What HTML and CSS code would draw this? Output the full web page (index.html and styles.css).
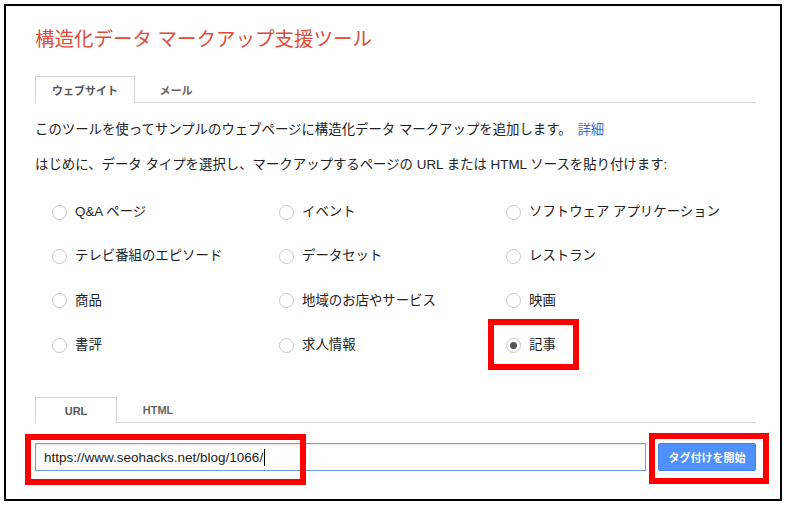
FILE: index.html
```html
<!DOCTYPE html>
<html lang="ja">
<head>
<meta charset="utf-8">
<title>構造化データ マークアップ支援ツール</title>
<link rel="stylesheet" href="styles.css">
</head>
<body>
<div class="frame">
  <h1 class="title">構造化データ マークアップ支援ツール</h1>

  <div class="tabs tabs-top">
    <div class="tab active">ウェブサイト</div>
    <div class="tab">メール</div>
  </div>

  <p class="intro">このツールを使ってサンプルのウェブページに構造化データ マークアップを追加します。 <a class="link" href="#">詳細</a></p>
  <p class="intro second">はじめに、データ タイプを選択し、マークアップするページの URL または HTML ソースを貼り付けます:</p>

  <div class="types">
    <div class="opt"><span class="radio"></span><span class="lbl">Q&amp;A ページ</span></div>
    <div class="opt"><span class="radio"></span><span class="lbl">イベント</span></div>
    <div class="opt"><span class="radio"></span><span class="lbl">ソフトウェア アプリケーション</span></div>
    <div class="opt"><span class="radio"></span><span class="lbl">テレビ番組のエピソード</span></div>
    <div class="opt"><span class="radio"></span><span class="lbl">データセット</span></div>
    <div class="opt"><span class="radio"></span><span class="lbl">レストラン</span></div>
    <div class="opt"><span class="radio"></span><span class="lbl">商品</span></div>
    <div class="opt"><span class="radio"></span><span class="lbl">地域のお店やサービス</span></div>
    <div class="opt"><span class="radio"></span><span class="lbl">映画</span></div>
    <div class="opt"><span class="radio"></span><span class="lbl">書評</span></div>
    <div class="opt"><span class="radio"></span><span class="lbl">求人情報</span></div>
    <div class="opt"><span class="radio checked"></span><span class="lbl">記事</span></div>
  </div>

  <div class="tabs tabs-src">
    <div class="tab active">URL</div>
    <div class="tab">HTML</div>
  </div>

  <div class="entry">
    <div class="url-input"><span class="url-text">https://www.seohacks.net/blog/1066/</span><span class="caret"></span></div>
    <div class="start-btn">タグ付けを開始</div>
  </div>

  <div class="mark mark-article"></div>
  <div class="mark mark-input"></div>
  <div class="mark mark-button"></div>
</div>
</body>
</html>
```

FILE: styles.css
```css
html, body {
  margin: 0;
  padding: 0;
  background: #fff;
}

body {
  font-family: "Liberation Sans", "Noto Sans CJK JP", sans-serif;
  color: #222;
}

.frame {
  position: relative;
  box-sizing: border-box;
  width: 778px;
  height: 497px;
  margin: 4px;
  border: 2px solid #000;
  padding: 21px 24px 0 29px;
}

.title {
  margin: 0;
  font-size: 19.5px;
  line-height: 24px;
  font-weight: normal;
  color: #dd4b39;
}

.tabs {
  display: flex;
  border-bottom: 1px solid #d4d4d4;
}

.tabs-top {
  margin-top: 25px;
  height: 26px;
}

.tabs-src {
  margin-top: 30px;
  height: 25px;
}

.tab {
  box-sizing: border-box;
  min-width: 82px;
  padding: 0 16px;
  height: 100%;
  display: flex;
  align-items: center;
  justify-content: center;
  font-size: 11px;
  font-weight: bold;
  color: #666;
  border: 1px solid transparent;
  border-bottom: none;
}

.tab.active {
  height: calc(100% + 1px);
  background: #fff;
  border-color: #d4d4d4;
  color: #555;
}

.intro {
  margin: 17px 0 0;
  font-size: 13.4px;
  line-height: 20px;
}

.intro.second {
  margin-top: 15px;
}

.link {
  color: #3a6fd0;
  text-decoration: none;
  margin-left: 2px;
}

.types {
  margin: 15px 0 0 17px;
  display: grid;
  grid-template-columns: 227px 227px 227px;
  grid-auto-rows: 44.3px;
}

.opt {
  display: flex;
  align-items: center;
  gap: 8px;
  font-size: 13.4px;
}

.lbl {
  margin-bottom: 4px;
}

.radio {
  box-sizing: border-box;
  width: 15px;
  height: 15px;
  border: 1px solid #c8c8c8;
  border-radius: 50%;
  background: #fff;
  display: flex;
  align-items: center;
  justify-content: center;
  flex: none;
}

.radio.checked::after {
  content: "";
  width: 7px;
  height: 7px;
  border-radius: 50%;
  background: #555;
}

.entry {
  margin-top: 20px;
  display: flex;
  gap: 12px;
}

.url-input {
  box-sizing: border-box;
  width: 611px;
  height: 28px;
  border: 1px solid #6d9eeb;
  box-shadow: inset 0 1px 2px rgba(0, 0, 0, 0.1);
  display: flex;
  align-items: center;
  padding-left: 8px;
  font-size: 13.5px;
  color: #222;
}

.caret {
  width: 1px;
  height: 17px;
  background: #000;
  margin-left: 1px;
}

.start-btn {
  box-sizing: border-box;
  width: 98px;
  height: 28px;
  background: #4d90fe;
  border: 1px solid #3f82ec;
  border-radius: 2px;
  color: #fff;
  font-size: 11px;
  font-weight: bold;
  display: flex;
  align-items: center;
  justify-content: center;
}

.mark {
  position: absolute;
  box-sizing: border-box;
  border: 6px solid #ff0000;
}

.mark-article {
  left: 482px;
  top: 313px;
  width: 91px;
  height: 51px;
}

.mark-input {
  left: 19px;
  top: 428px;
  width: 281px;
  height: 51px;
}

.mark-button {
  left: 643px;
  top: 427px;
  width: 120px;
  height: 51px;
}
```
